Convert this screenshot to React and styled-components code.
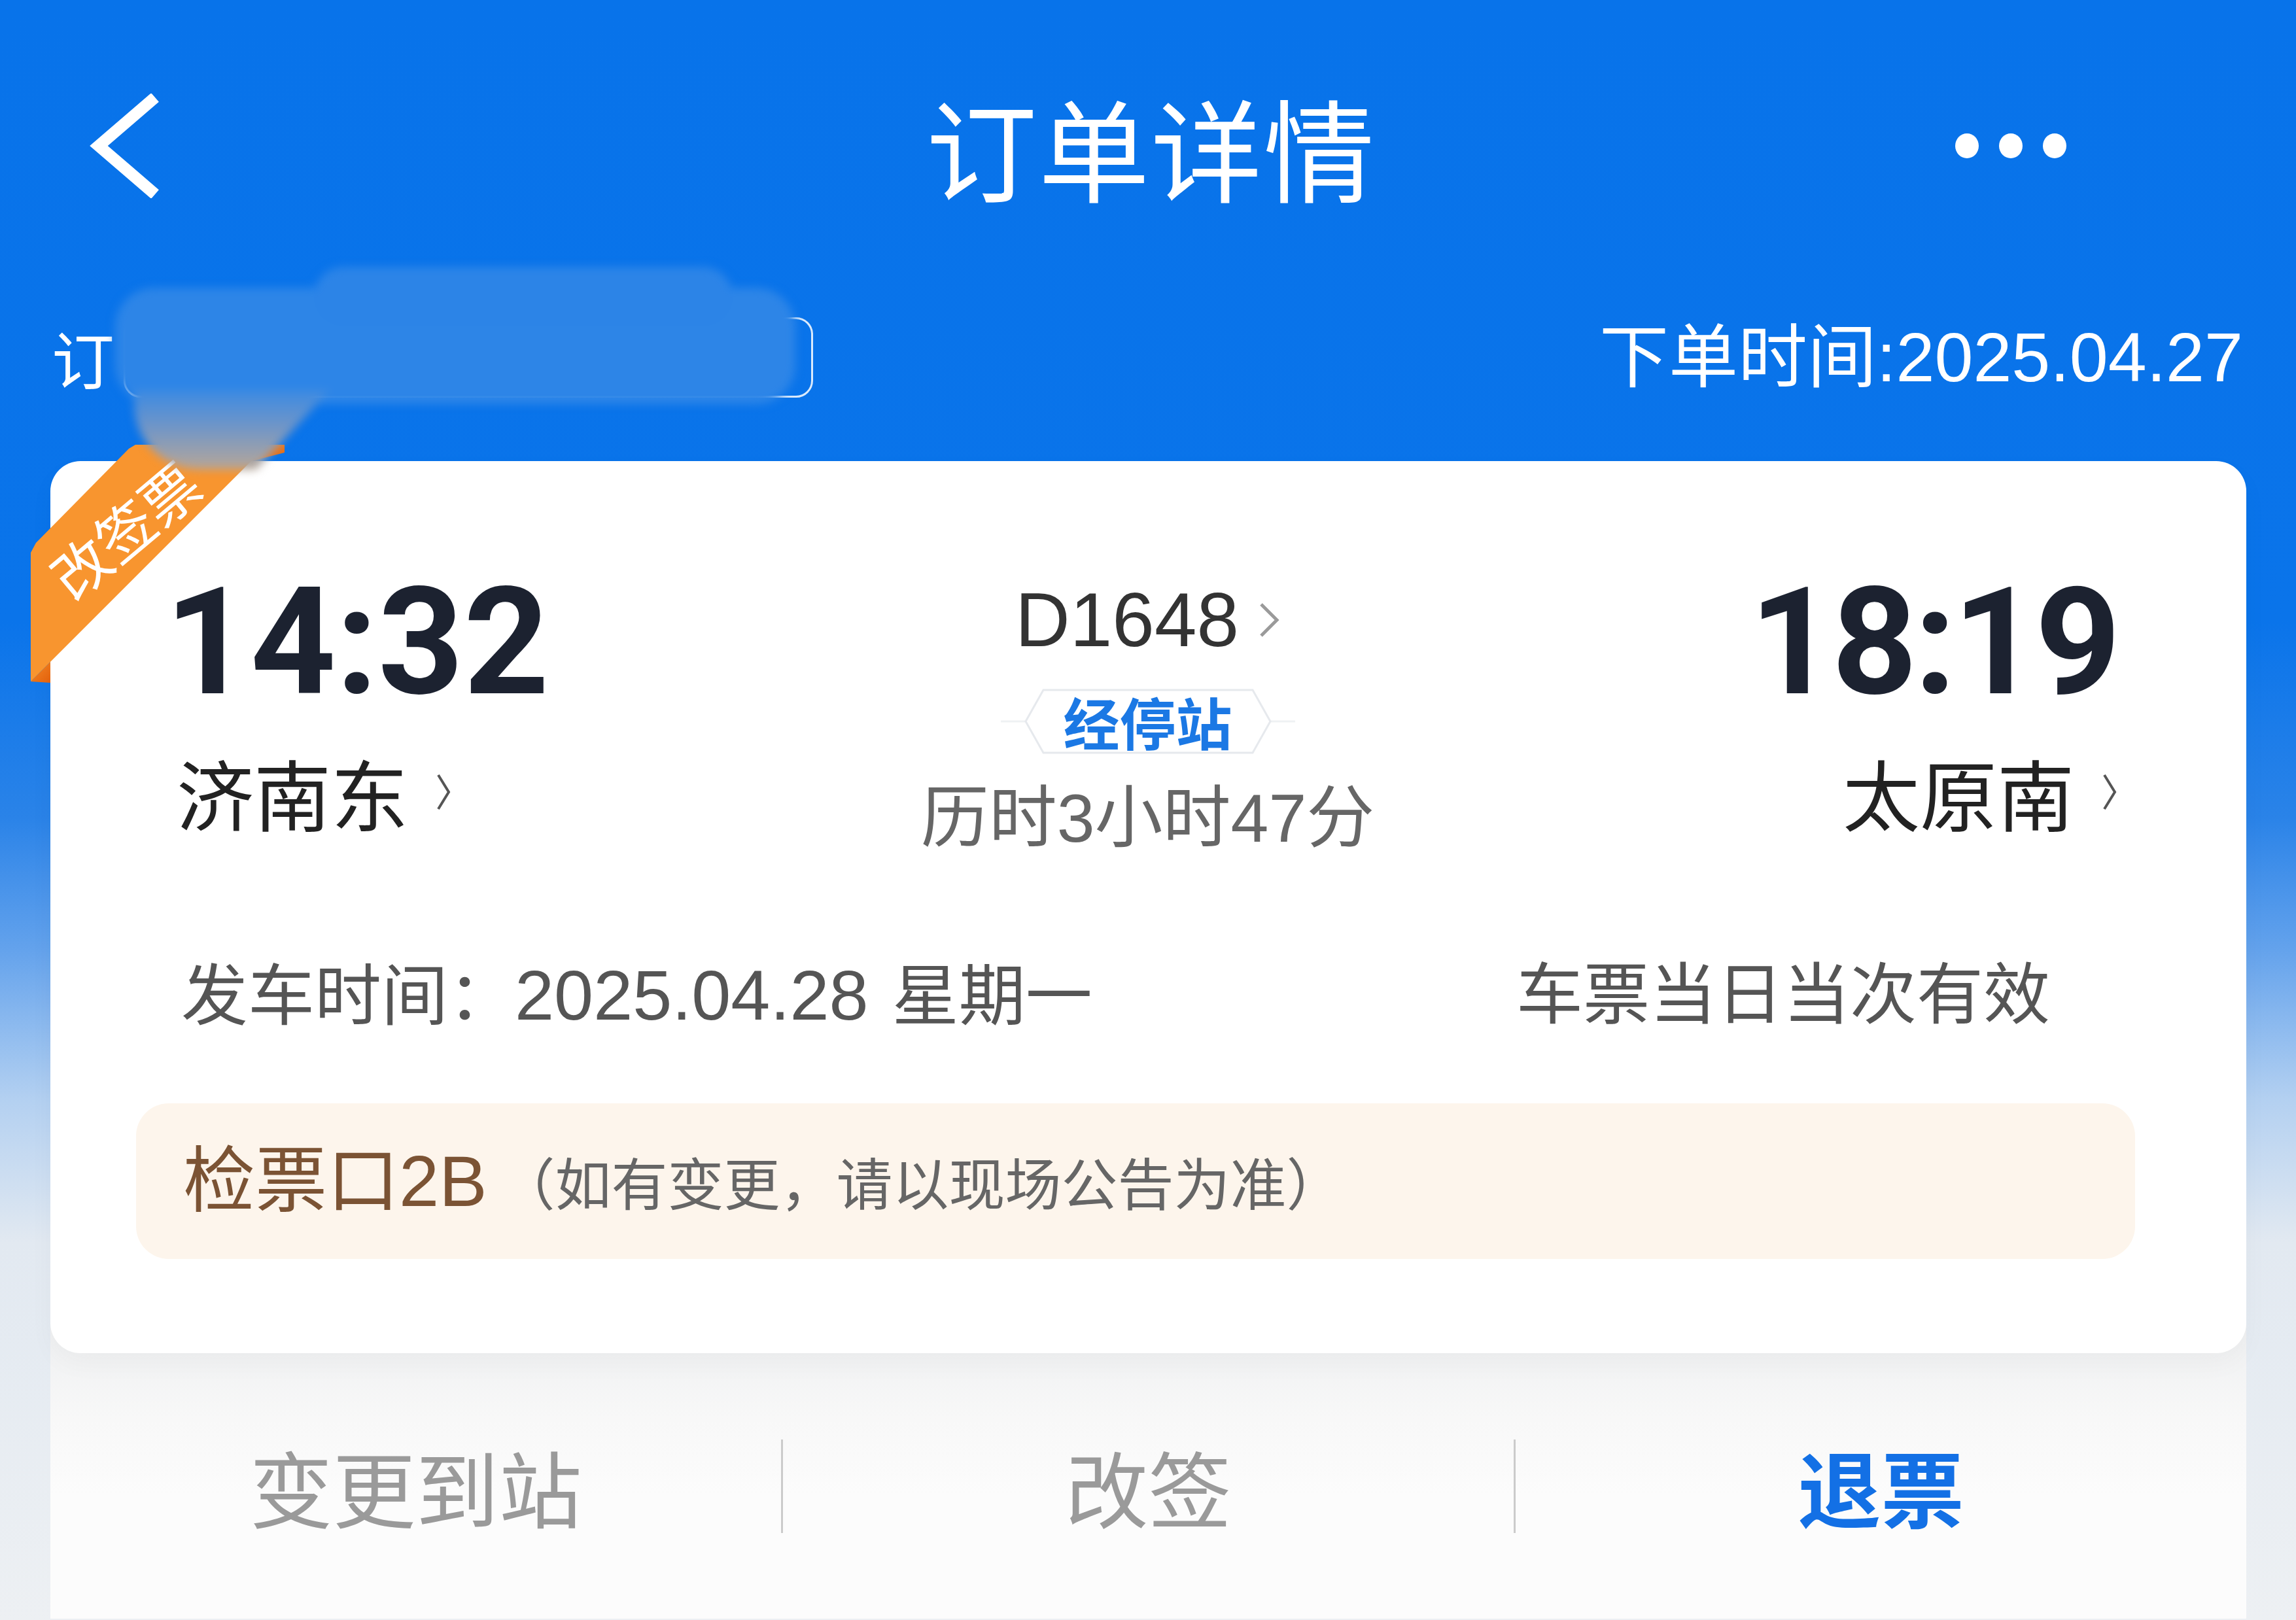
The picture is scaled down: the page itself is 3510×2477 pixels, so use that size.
import React from "react";
import styled, { createGlobalStyle } from "styled-components";

const GlobalStyle = createGlobalStyle`
  html, body {
    margin: 0;
    padding: 0;
  }
  body {
    font-family: "Noto Sans CJK SC", sans-serif;
    background: #eceff3;
  }
`;

const Page = styled.div`
  width: 3510px;
  height: 2477px;
  overflow: hidden;
  background: linear-gradient(
    180deg,
    #0873ea 0px,
    #0a74ea 950px,
    #2a83e8 1250px,
    #63a2ec 1450px,
    #b3d0f1 1680px,
    #e2e9f1 1900px,
    #edf0f3 2477px
  );
`;

const NavBar = styled.header`
  height: 446px;
  display: grid;
  grid-template-columns: 1fr auto 1fr;
  align-items: center;
  padding: 0 128px 0 137px;
`;

const BackIcon = styled.svg`
  width: 110px;
  height: 160px;
  display: block;
`;

const Title = styled.h1`
  margin: 0;
  font-size: 170px;
  font-weight: 400;
  color: #fff;
  line-height: 1;
  letter-spacing: 2px;
`;

const MoreDots = styled.div`
  justify-self: end;
  margin-right: 223px;
  display: flex;
  gap: 31px;
  span {
    width: 36px;
    height: 38px;
    border-radius: 50%;
    background: #fff;
  }
`;

const OrderRow = styled.div`
  position: relative;
  height: 200px;
  display: flex;
  align-items: center;
  justify-content: space-between;
  padding: 0 81px 0 79px;
  color: #fff;
  font-size: 96px;
  line-height: 1;
`;

const OrderNo = styled.div`
  display: flex;
  align-items: center;
  gap: 14px;
`;

const OrderPill = styled.div`
  width: 1054px;
  height: 123px;
  box-sizing: border-box;
  border: 3px solid rgba(255, 255, 255, 0.85);
  border-radius: 26px;
`;

const OrderTime = styled.div`
  font-family: "Liberation Sans", "Noto Sans CJK SC", sans-serif;
  font-size: 106px;
`;

/* blurred mask that hides the order number */
const Smudge = styled.div`
  position: absolute;
  left: 0;
  top: 0;
  width: 100%;
  height: 100%;
  filter: blur(7px);
  pointer-events: none;
  z-index: 5;
`;

const SmudgePart = styled.div`
  position: absolute;
  left: ${(p) => p.$x}px;
  top: ${(p) => p.$y}px;
  width: ${(p) => p.$w}px;
  height: ${(p) => p.$h}px;
  border-radius: ${(p) => p.$r};
  background: ${(p) => p.$bg};
  clip-path: ${(p) => p.$clip || "none"};
`;

const Card = styled.section`
  position: relative;
  z-index: 1;
  margin: 59px 76px 0 77px;
  background: #fff;
  border-radius: 46px;
  padding: 163px 0 144px;
  box-shadow: 0 16px 40px rgba(0, 0, 0, 0.03);
`;

const Ribbon = styled.svg`
  position: absolute;
  left: -30px;
  top: -25px;
  width: 395px;
  height: 390px;
  z-index: 2;
  overflow: visible;
`;

const TripGrid = styled.div`
  display: grid;
  grid-template-columns: 1fr auto 1fr;
  padding: 0 197px 0 175px;
`;

const End = styled.div`
  display: flex;
  flex-direction: column;
  align-items: ${(p) => (p.$right ? "flex-end" : "flex-start")};
`;

const Clock = styled.div`
  font-family: Roboto, "Liberation Sans", sans-serif;
  font-weight: 700;
  font-size: 228px;
  line-height: 1;
  color: #1c2230;
  letter-spacing: ${(p) => (p.$tight ? -5 : 0)}px;
`;

const Station = styled.div`
  margin-top: 56px;
  display: flex;
  align-items: center;
  gap: 42px;
  font-size: 118px;
  line-height: 1;
  color: #222;
  padding-left: ${(p) => (p.$right ? 0 : 18)}px;
`;

const Middle = styled.div`
  margin-left: 20px;
  padding-top: 22px;
  display: flex;
  flex-direction: column;
  align-items: center;
`;

const TrainNo = styled.div`
  display: flex;
  align-items: center;
  gap: 29px;
  font-family: "Liberation Sans", sans-serif;
  font-size: 116px;
  line-height: 1;
  color: #333;
`;

const Stops = styled.div`
  position: relative;
  margin-top: 47px;
  width: 450px;
  height: 100px;
  display: flex;
  align-items: center;
  justify-content: center;
  font-size: 86px;
  font-weight: 700;
  color: #1b78e4;
  line-height: 1;
  svg {
    position: absolute;
    inset: 0;
  }
  span {
    position: relative;
  }
`;

const Duration = styled.div`
  margin-top: 46px;
  font-family: "Liberation Sans", "Noto Sans CJK SC", sans-serif;
  font-size: 104px;
  line-height: 1;
  color: #666;
`;

const DateRow = styled.div`
  margin-top: 165px;
  display: flex;
  justify-content: space-between;
  align-items: center;
  padding: 0 300px 0 200px;
  font-family: "Liberation Sans", "Noto Sans CJK SC", sans-serif;
  font-size: 102px;
  line-height: 1;
  color: #555;
`;

const DateValue = styled.span`
  font-size: 108px;
  margin-right: 8px;
`;

const Gate = styled.div`
  margin: 111px 170px 0 131px;
  height: 238px;
  border-radius: 50px;
  background: #fdf5ec;
  display: flex;
  align-items: center;
  padding-left: 72px;
`;

const GateName = styled.span`
  font-family: "Liberation Sans", "Noto Sans CJK SC", sans-serif;
  font-size: 110px;
  color: #7b5334;
  line-height: 1;
`;

const GateNote = styled.span`
  margin-left: 18px;
  font-size: 86px;
  color: #666;
  line-height: 1;
`;

const ActionBar = styled.nav`
  margin: -60px 76px 0 77px;
  padding-top: 60px;
  height: 406px;
  display: grid;
  grid-template-columns: 1fr 3px 1fr 3px 1fr;
  align-items: center;
  background: linear-gradient(180deg, #eeeff0 0px, #f1f2f3 60px, #f8f8f8 160px, #fcfcfc 280px);
`;

const Action = styled.div`
  text-align: center;
  font-size: 127px;
  line-height: 1;
  font-weight: ${(p) => (p.$primary ? 700 : 400)};
  color: ${(p) => (p.$primary ? "#1370e5" : "#9a9a9a")};
`;

const Divider = styled.div`
  width: 3px;
  height: 143px;
  background: #cbcbcb;
`;

const Chevron = ({ w, h, color, sw }) => (
  <svg width={w} height={h} viewBox={`0 0 ${w} ${h}`}>
    <polyline
      points={`${sw},${sw} ${w - sw},${h / 2} ${sw},${h - sw}`}
      fill="none"
      stroke={color}
      strokeWidth={sw}
    />
  </svg>
);

export default function App() {
  return (
    <Page>
      <GlobalStyle />
      <NavBar>
        <BackIcon viewBox="0 0 110 160">
          <polyline points="100,6 14,80 100,154" fill="none" stroke="#fff" strokeWidth="18" />
        </BackIcon>
        <Title>订单详情</Title>
        <MoreDots>
          <span />
          <span />
          <span />
        </MoreDots>
      </NavBar>

      <OrderRow>
        <OrderNo>
          <span>订</span>
          <OrderPill />
        </OrderNo>
        <OrderTime>下单时间:2025.04.27</OrderTime>
        <Smudge>
          <SmudgePart $x={176} $y={-6} $w={1040} $h={178} $r="60px" $bg="#2d85e7" />
          <SmudgePart $x={480} $y={-38} $w={640} $h={90} $r="45px" $bg="#2c84e7" />
          <SmudgePart
            $x={205}
            $y={150}
            $w={300}
            $h={122}
            $r="0 0 90px 100px"
            $bg="linear-gradient(180deg, #3b8ae3 0%, #6e95c8 45%, #a3a2a6 85%, #b7a594 100%)"
            $clip="polygon(0 0, 100% 0, 62% 100%, 0 100%)"
          />
        </Smudge>
      </OrderRow>

      <Card>
        <Ribbon viewBox="0 0 395 390">
          <defs>
            <linearGradient id="foldTop" x1="0" y1="0" x2="1" y2="1">
              <stop offset="0" stopColor="#f58a26" />
              <stop offset="1" stopColor="#e2640f" />
            </linearGradient>
            <linearGradient id="foldBottom" x1="0" y1="0" x2="1" y2="1">
              <stop offset="0" stopColor="#f58a26" />
              <stop offset="1" stopColor="#e2600c" />
            </linearGradient>
          </defs>
          <polygon points="362,0 388,0 388,12 337,25" fill="url(#foldTop)" />
          <polygon points="30,332 30,364 0,362" fill="url(#foldBottom)" />
          <polygon points="0,165 8,150 150,6 160,0 362,0 0,362" fill="#f8952f" />
          <text
            x="142"
            y="128"
            transform="rotate(-40 142 128)"
            textAnchor="middle"
            dominantBaseline="central"
            fontSize="88"
            fill="#fff"
            fontFamily="Noto Sans CJK SC, sans-serif"
          >
            改签票
          </text>
        </Ribbon>

        <TripGrid>
          <End>
            <Clock>14:32</Clock>
            <Station>
              济南东
              <Chevron w={24} h={60} color="#555" sw={4} />
            </Station>
          </End>
          <Middle>
            <TrainNo>
              D1648
              <Chevron w={34} h={58} color="#9a9a9a" sw={5} />
            </TrainNo>
            <Stops>
              <svg viewBox="0 0 450 100" width="450" height="100">
                <line x1="0" y1="50" x2="38" y2="50" stroke="#eff1f3" strokeWidth="3" />
                <line x1="412" y1="50" x2="450" y2="50" stroke="#eff1f3" strokeWidth="3" />
                <polygon
                  points="38,50 65,2 385,2 412,50 385,98 65,98"
                  fill="#fff"
                  stroke="#e6e9ed"
                  strokeWidth="3"
                />
              </svg>
              <span>经停站</span>
            </Stops>
            <Duration>历时3小时47分</Duration>
          </Middle>
          <End $right>
            <Clock $tight>18:19</Clock>
            <Station $right>
              太原南
              <Chevron w={24} h={60} color="#555" sw={4} />
            </Station>
          </End>
        </TripGrid>

        <DateRow>
          <span>
            发车时间：<DateValue>2025.04.28</DateValue> 星期一
          </span>
          <span>车票当日当次有效</span>
        </DateRow>

        <Gate>
          <GateName>检票口2B</GateName>
          <GateNote>（如有变更，请以现场公告为准）</GateNote>
        </Gate>
      </Card>

      <ActionBar>
        <Action>变更到站</Action>
        <Divider />
        <Action>改签</Action>
        <Divider />
        <Action $primary>退票</Action>
      </ActionBar>
    </Page>
  );
}
